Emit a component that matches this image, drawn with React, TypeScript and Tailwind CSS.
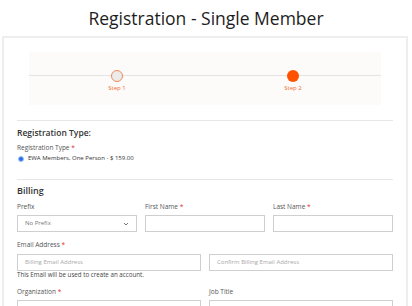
import React from "react";

const Req = () => <span className="text-[#e03030]"> *</span>;

function Label({ children, req }: { children: React.ReactNode; req?: boolean }) {
  return (
    <div className="text-[6.5px] leading-[8px] text-[#555]">
      {children}
      {req && <Req />}
    </div>
  );
}

function Input({ placeholder }: { placeholder?: string }) {
  return (
    <div className="h-[17px] border border-[#cfcfcf] bg-white flex items-center px-[7px] text-[6px] text-[#a8a8a8]">
      {placeholder}
    </div>
  );
}

export default function App() {
  return (
    <div className="w-[412px] h-[306px] overflow-hidden bg-white" style={{ fontFamily: '"Open Sans", "Noto Sans", sans-serif' }}>
      <div className="h-[36px] flex items-center justify-center text-[17.5px] text-[#1d1d1d] pt-[1px]">
        Registration - Single Member
      </div>
      <div className="ml-[2px] w-[406px] h-[300px] border-2 border-[#eceef0] px-[13px] pt-[14px]">
        {/* stepper */}
        <div className="mx-[12px] h-[53px] bg-[#fdfafa] relative">
          <div className="absolute left-0 right-0 top-[23px] h-px bg-[#e4e4e4]" />
          <div className="grid grid-cols-2 h-full relative">
            <div className="flex flex-col items-center pt-[18px]">
              <div className="w-[12px] h-[12px] rounded-full bg-[#ececec] border-[1.5px] border-[#f08a55]" />
              <div className="text-[6px] leading-[7px] text-[#f06a2a] mt-[3px]">Step 1</div>
            </div>
            <div className="flex flex-col items-center pt-[18px]">
              <div className="w-[12px] h-[12px] rounded-full bg-[#ff5200]" />
              <div className="text-[6px] leading-[7px] text-[#f06a2a] mt-[3px]">Step 2</div>
            </div>
          </div>
        </div>
        <div className="h-px bg-[#e6e6e6] mt-[15px]" />
        <div className="text-[8.5px] leading-[12px] font-semibold text-[#333] mt-[6px]">Registration Type:</div>
        <div className="mt-[5px]">
          <Label req>Registration Type</Label>
        </div>
        <div className="flex items-center mt-[2px] gap-[4px] pl-[1px]">
          <div className="w-[6px] h-[6px] rounded-full bg-[#2a6ee8] border border-[#9fc0f5]" />
          <div className="text-[6px] leading-[9px] text-[#333]">EWA Members, One Person - $ 159.00</div>
        </div>
        <div className="h-px bg-[#e6e6e6] mt-[16px]" />
        <div className="text-[9px] leading-[12px] font-semibold text-[#333] mt-[5px]">Billing</div>
        <div className="grid grid-cols-3 gap-x-[8px] mt-[6px]">
          <div>
            <Label>Prefix</Label>
            <div className="mt-[4px] h-[17px] border border-[#cfcfcf] bg-white flex items-center justify-between px-[7px] text-[6px] text-[#777]">
              <span>No Prefix</span>
              <svg width="6" height="4" viewBox="0 0 6 4"><path d="M1 1l2 2 2-2" stroke="#666" strokeWidth="0.9" fill="none" /></svg>
            </div>
          </div>
          <div>
            <Label req>First Name</Label>
            <div className="mt-[4px]"><Input /></div>
          </div>
          <div>
            <Label req>Last Name</Label>
            <div className="mt-[4px]"><Input /></div>
          </div>
        </div>
        <div className="mt-[9px]">
          <Label req>Email Address</Label>
        </div>
        <div className="grid grid-cols-2 gap-x-[8px] mt-[5px]">
          <Input placeholder="Billing Email Address" />
          <Input placeholder="Confirm Billing Email Address" />
        </div>
        <div className="text-[6.2px] leading-[7px] text-[#444]">This Email will be used to create an account.</div>
        <div className="grid grid-cols-2 gap-x-[8px] mt-[10px]">
          <div>
            <Label req>Organization</Label>
            <div className="mt-[4px]"><Input /></div>
          </div>
          <div>
            <Label>Job Title</Label>
            <div className="mt-[4px]"><Input /></div>
          </div>
        </div>
      </div>
    </div>
  );
}
